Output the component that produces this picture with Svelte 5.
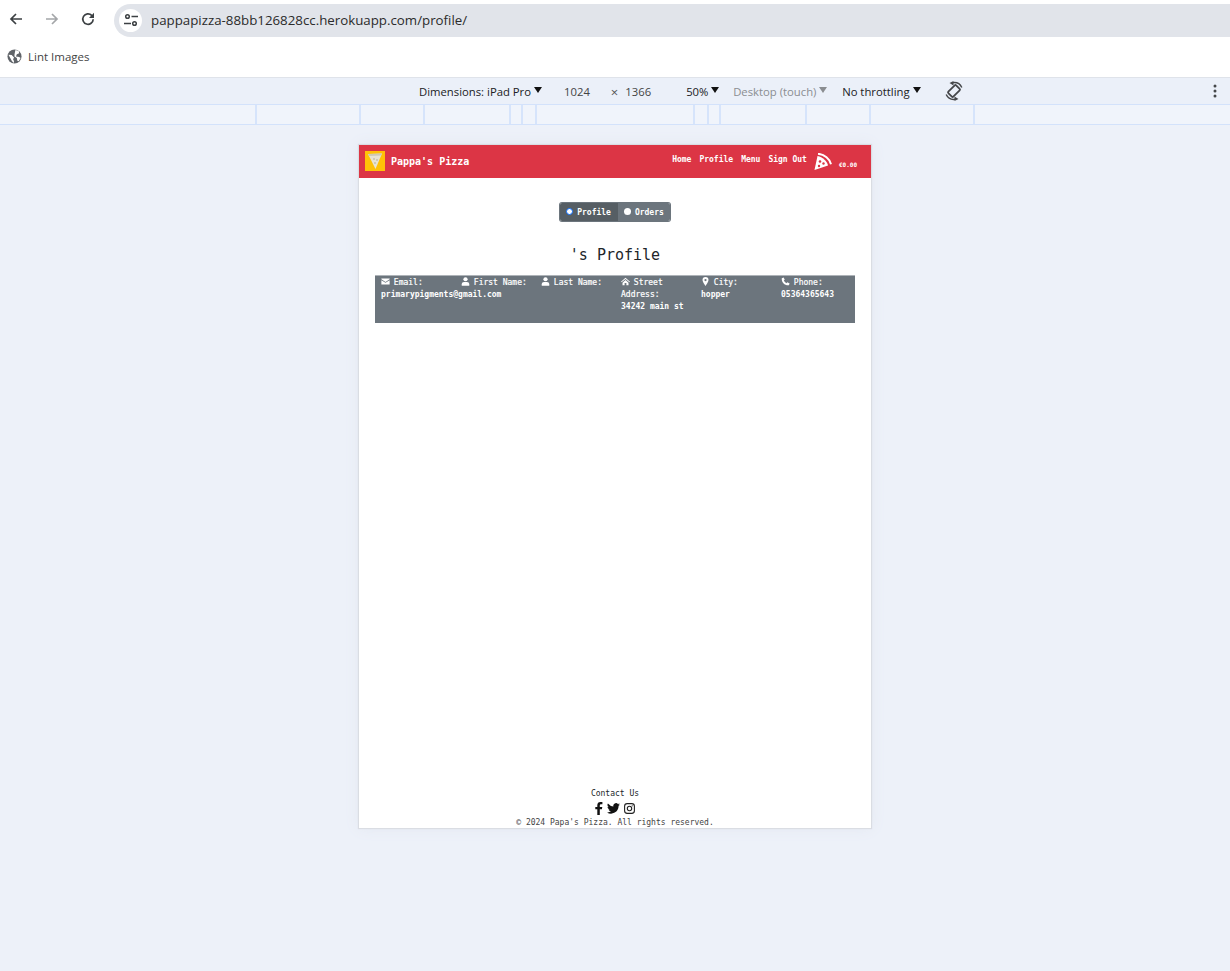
<script>
    const profileFields = [
        { icon: 'mail', label: 'Email:', value: 'primarypigments@gmail.com' },
        { icon: 'user', label: 'First Name:', value: '' },
        { icon: 'user', label: 'Last Name:', value: '' },
        { icon: 'home', label: 'Street Address:', value: '34242 main st' },
        { icon: 'pin', label: 'City:', value: 'hopper' },
        { icon: 'phone', label: 'Phone:', value: '05364365643' }
    ]

    const navLinks = ['Home', 'Profile', 'Menu', 'Sign Out']

    // widths between the media query ticks in the ruler
    const rulerGaps = [257, 104, 64, 86, 12, 14, 158, 14, 12, 86, 64, 104]
</script>

<div class="browser">
    <header class="toolbar">
        <svg class="nav-icon" viewBox="0 0 16 16"><path d="M14 8H3M8 3 3 8l5 5" fill="none" stroke="#3c4043" stroke-width="1.7"/></svg>
        <svg class="nav-icon" viewBox="0 0 16 16"><path d="M2 8h11M8 3l5 5-5 5" fill="none" stroke="#a4a6a9" stroke-width="1.7"/></svg>
        <svg class="nav-icon" viewBox="0 0 16 16"><path d="M13.2 8.2A5.2 5.2 0 1 1 11.7 4.4L13.5 6" fill="none" stroke="#3c4043" stroke-width="1.7"/><path d="M14 1.8V7H9z" fill="#3c4043"/></svg>
        <div class="omnibox">
            <span class="site-info">
                <svg width="16" height="16" viewBox="0 0 16 16"><g fill="none" stroke="#3c4043" stroke-width="1.5"><circle cx="4.5" cy="4.5" r="1.8"/><circle cx="11.5" cy="11.5" r="1.8"/><path d="M8.5 4.5H15M1 11.5h7"/></g></svg>
            </span>
            <span class="url">pappapizza-88bb126828cc.herokuapp.com/profile/</span>
        </div>
    </header>

    <div class="bookmarks">
        <svg width="15" height="15" viewBox="0 0 16 16"><circle cx="8" cy="8" r="7.5" fill="#5f6368"/><path d="M1.500 6 5 6.500 7.500 9 6.500 11 7.500 13 7 15 5 12.500 3.500 9.500zM9 1l3.500 1.200L13 4.500 10.500 5.500 9.500 8 13 8.500 14.500 9.500 12.500 13 11 12.500 10.500 9.500 8 8 8 5.500z" fill="#fff"/></svg>
        <span>Lint Images</span>
    </div>

    <div class="device-bar">
        <span class="device-item dims">Dimensions: iPad Pro<i class="caret"></i></span>
        <span class="device-item size">1024</span>
        <span class="device-item times">×</span>
        <span class="device-item size">1366</span>
        <span class="device-item zoom">50%<i class="caret"></i></span>
        <span class="device-item muted">Desktop (touch)<i class="caret"></i></span>
        <span class="device-item throttle">No throttling<i class="caret"></i></span>
        <svg class="rotate" width="20" height="20" viewBox="0 0 20 20">
            <rect x="6.500" y="4.500" width="7" height="11" rx="1" transform="rotate(45 10 10)" fill="none" stroke="#45474a" stroke-width="1.800"/>
            <g fill="none" stroke="#45474a" stroke-width="1.500">
                <path d="M9 1.700A8.500 8.500 0 0 1 17.800 6.500"/>
                <path d="M11 18.300A8.500 8.500 0 0 1 2.200 13.500"/>
            </g>
            <path d="M9.500 0 5.500 2 9.500 4.500zM10.500 20 14.500 18 10.500 15.500z" fill="#45474a"/>
        </svg>
        <svg class="kebab" width="4" height="14" viewBox="0 0 4 14"><circle cx="2" cy="2" r="1.5" fill="#45474a"/><circle cx="2" cy="7" r="1.5" fill="#45474a"/><circle cx="2" cy="12" r="1.5" fill="#45474a"/></svg>
    </div>

    <div class="ruler">
        {#each rulerGaps as gap}
            <span class="ruler-cell" style="width: {gap}px"></span>
        {/each}
    </div>

    <main class="viewport">
        <div class="page">
            <nav class="navbar">
                <div class="logo">
                    <svg width="14" height="16" viewBox="0 0 14 16"><path d="M0 1 14 .5 7.500 16z" fill="#e8e3d4"/><path d="M0 1 14 .5l-.8 2L1 3z" fill="#cfc8b5"/><circle cx="6" cy="6" r=".8" fill="#b0a891"/><circle cx="9" cy="7" r=".8" fill="#b0a891"/><circle cx="7" cy="10" r=".8" fill="#b0a891"/></svg>
                </div>
                <span class="brand">Pappa's Pizza</span>
                <div class="links">
                    {#each navLinks as link}
                        <span>{link}</span>
                    {/each}
                </div>
                <svg class="cart" width="18" height="17" viewBox="0 0 18 17">
                    <path d="M3.500 3 0.500 17 14 12.500C13 8 8.500 4 3.500 3Z" fill="#fff"/>
                    <path d="M4 0.800C10.500 1.300 15.800 6 17 11.200" fill="none" stroke="#fff" stroke-width="2"/>
                    <circle cx="6" cy="8.500" r="1.300" fill="#dc3545"/><circle cx="9.500" cy="10.500" r="1.200" fill="#dc3545"/><circle cx="5" cy="13" r="1.200" fill="#dc3545"/>
                </svg>
                <span class="total">€0.00</span>
            </nav>

            <div class="toggle">
                <span class="toggle-btn active"><i class="radio checked"></i>Profile</span>
                <span class="toggle-btn"><i class="radio"></i>Orders</span>
            </div>

            <h1>'s Profile</h1>

            <section class="details">
                {#each profileFields as field}
                    <div class="field">
                        <svg class="field-icon" viewBox="0 0 12 12">
                            {#if field.icon === 'mail'}
                                <path d="M.5 2h11v1L6 6.500.5 3zM.5 4.300 6 7.800l5.500-3.500V10H.500z" fill="#fff"/>
                            {:else if field.icon === 'user'}
                                <circle cx="6" cy="3" r="2.800" fill="#fff"/><path d="M1 11.500V9.500C1 7.500 2.500 6.500 4 6.500h4c1.500 0 3 1 3 3v2z" fill="#fff"/>
                            {:else if field.icon === 'home'}
                                <path d="M6 1 0 6.300l.8.800L6 2.800l5.200 4.300.8-.8zM2 7.500 6 4l4 3.500V11H7.200V8H4.800v3H2z" fill="#fff"/>
                            {:else if field.icon === 'pin'}
                                <path fill-rule="evenodd" d="M6 0a4 4 0 0 1 4 4C10 6.500 7 10 6 12 5 10 2 6.500 2 4a4 4 0 0 1 4-4zm0 2.500a1.500 1.500 0 1 0 0 3 1.500 1.500 0 0 0 0-3z" fill="#fff"/>
                            {:else}
                                <path d="M1 1.500 3.500.5 5 3.500 3.700 4.800C4.500 6.200 5.800 7.500 7.200 8.300L8.500 7l3 1.500-1 2.500C5 11.500.5 7 1 1.500z" fill="#fff"/>
                            {/if}
                        </svg>
                        <span class="field-label">{field.label}</span>
                        <div class="field-value">{field.value}</div>
                    </div>
                {/each}
            </section>

            <footer class="page-footer">
                <div class="contact">Contact Us</div>
                <div class="socials">
                    <svg width="8" height="13" viewBox="0 0 8 13"><path d="M2.300 13V7.300H.300V5h2V3.300C2.300 1.200 3.500 0 5.400 0c.9 0 1.700.1 2 .1v2.100H6.100C5.100 2.200 4.800 2.800 4.800 3.500V5h2.500l-.4 2.300H4.800V13z" fill="#111"/></svg>
                    <svg width="13" height="11" viewBox="0 0 24 20"><path d="M24 2.400a10 10 0 0 1-2.800.8A5 5 0 0 0 23.300.5a10 10 0 0 1-3.100 1.200 4.900 4.900 0 0 0-8.400 4.500A14 14 0 0 1 1.700.9a4.900 4.900 0 0 0 1.500 6.600 5 5 0 0 1-2.200-.6c0 2.400 1.700 4.400 3.900 4.900a5 5 0 0 1-2.200.1 4.900 4.900 0 0 0 4.600 3.400A9.900 9.900 0 0 1 0 17.300 14 14 0 0 0 7.500 19.500c9.100 0 14.200-7.700 13.900-14.500A10 10 0 0 0 24 2.400z" fill="#111"/></svg>
                    <svg width="11" height="11" viewBox="0 0 11 11"><rect x=".6" y=".6" width="9.800" height="9.800" rx="2.600" fill="none" stroke="#222" stroke-width="1.100"/><circle cx="5.500" cy="5.500" r="2.200" fill="none" stroke="#222" stroke-width="1.100"/><circle cx="8.200" cy="2.800" r=".6" fill="#222"/></svg>
                </div>
                <div class="copyright">© 2024 Papa's Pizza. All rights reserved.</div>
            </footer>
        </div>
    </main>
</div>

<style>
    :global(body) {
        margin: 0;
        background: #edf1f9;
    }

    .browser {
        width: 1230px;
        height: 971px;
        display: flex;
        flex-direction: column;
        overflow: hidden;
        font-family: "Open Sans", "Noto Sans", sans-serif;
        color: #202124;
    }

    .toolbar {
        height: 37px;
        display: flex;
        align-items: center;
        background: #fff;
        padding-left: 8px;
        gap: 20px;
        box-sizing: border-box;
    }

    .nav-icon {
        width: 16px;
        height: 16px;
    }

    .omnibox {
        flex: 1;
        height: 33px;
        margin-top: 3px;
        margin-left: -2px;
        display: flex;
        align-items: center;
        background: #e1e4ea;
        border-radius: 17px 0 0 17px;
        padding-left: 5px;
    }

    .site-info {
        width: 23px;
        height: 23px;
        border-radius: 50%;
        background: #fff;
        display: flex;
        align-items: center;
        justify-content: center;
    }

    .url {
        margin-left: 9px;
        font-size: 13.300px;
        color: #2b2b2b;
    }

    .bookmarks {
        height: 39px;
        display: flex;
        align-items: center;
        gap: 6px;
        padding-left: 7px;
        padding-bottom: 1px;
        background: #fff;
        border-bottom: 1px solid #dfe3ea;
        font-size: 11.500px;
        color: #444;
    }

    .device-bar {
        height: 26px;
        position: relative;
        display: flex;
        align-items: center;
        background: #ebf0f9;
        font-size: 11.300px;
        color: #202124;
        padding-left: 419px;
        border-bottom: 1px solid #d3e2fb;
    }

    .device-item {
        display: inline-flex;
        align-items: center;
        white-space: nowrap;
    }

    .caret {
        display: inline-block;
        width: 0;
        height: 0;
        margin: -3px 0 0 3px;
        border-left: 4.500px solid transparent;
        border-right: 4.500px solid transparent;
        border-top: 6px solid #111;
    }

    .dims { width: 145px; }
    .size { color: #444; }
    .times { margin: 2px 7px 0 21px; color: #555; font-size: 13px; }
    .zoom { margin-left: 35px; width: 47px; }
    .muted { color: #8a8d91; width: 109px; }
    .muted .caret { border-top-color: #8a8d91; }
    .throttle { width: 102px; }
    .rotate { margin-top: -1px; }

    .kebab {
        position: absolute;
        right: 13px;
        top: 6px;
    }

    .ruler {
        height: 19px;
        display: flex;
        background: #f0f4fb;
        border-bottom: 1px solid #d3e2fb;
    }

    .ruler-cell {
        box-sizing: border-box;
        border-right: 2px solid #d6e4fb;
    }

    .viewport {
        flex: 1;
        display: flex;
        justify-content: center;
        padding-top: 20px;
    }

    .page {
        width: 512px;
        height: 683px;
        display: flex;
        flex-direction: column;
        background: #fff;
        box-shadow: 0 0 1px 1px #dadde3, 0 0 14px #e3e7f0;
        font-family: "DejaVu Sans Mono", "Liberation Mono", monospace;
    }

    .navbar {
        height: 33px;
        flex-shrink: 0;
        display: flex;
        align-items: center;
        background: #dc3545;
        color: #fff;
        font-weight: 700;
        padding-left: 6px;
    }

    .logo {
        width: 20px;
        height: 20px;
        margin-top: -1px;
        background: #ffc107;
        display: flex;
        align-items: center;
        justify-content: center;
    }

    .brand {
        margin: -1px 0 0 6px;
        font-size: 10px;
    }

    .links {
        margin-left: auto;
        display: flex;
        gap: 8px;
        font-size: 8px;
        margin-top: -4px;
    }

    .cart {
        margin-left: 7px;
        margin-top: -1px;
    }

    .total {
        font-size: 6px;
        margin: 5px 14px 0 7px;
    }

    .toggle {
        align-self: center;
        display: flex;
        margin-top: 25px;
        color: #fff;
        font-size: 8px;
        font-weight: 700;
        border-radius: 2px;
        overflow: hidden;
        box-shadow: 0 0 0 1px #6c757d;
    }

    .toggle-btn {
        height: 18px;
        display: flex;
        align-items: center;
        background: #6c757d;
        padding: 0 6px;
        gap: 4px;
    }

    .toggle-btn.active {
        background: #565e64;
        padding-right: 7px;
    }

    .radio {
        width: 7px;
        height: 7px;
        margin-top: -2px;
        border-radius: 50%;
        background: #fff;
        box-sizing: border-box;
    }

    .radio.checked {
        border: 1.500px solid #0d6efd;
    }

    h1 {
        margin: 25px 0 0;
        text-align: center;
        font-size: 15px;
        line-height: 18px;
        font-weight: 400;
        color: #212529;
    }

    .details {
        margin: 11px 16px 0;
        display: grid;
        grid-template-columns: repeat(6, 80px);
        height: 48px;
        background: #6c757d;
        border-top: 1px solid #aeb3b8;
        box-sizing: border-box;
        color: #fff;
        font-size: 8px;
        line-height: 12px;
        font-weight: 700;
    }

    .field {
        padding: 1px 6px 0;
        height: 47px;
        box-sizing: border-box;
    }

    .field-icon {
        display: inline-block;
        vertical-align: -1px;
        width: 9px;
        height: 9px;
        margin-right: -1px;
    }

    .field-label {
        font-weight: 400;
        -webkit-text-stroke: 0.2px #fff;
    }

    .field-value {
        white-space: nowrap;
    }

    .page-footer {
        margin-top: auto;
        text-align: center;
        color: #212529;
    }

    .contact {
        font-size: 8px;
        line-height: 10px;
    }

    .socials {
        display: flex;
        justify-content: center;
        align-items: center;
        gap: 4px;
        height: 15px;
        margin: 2px 0;
    }

    .copyright {
        font-size: 8px;
        line-height: 10px;
        color: #444;
    }
</style>
